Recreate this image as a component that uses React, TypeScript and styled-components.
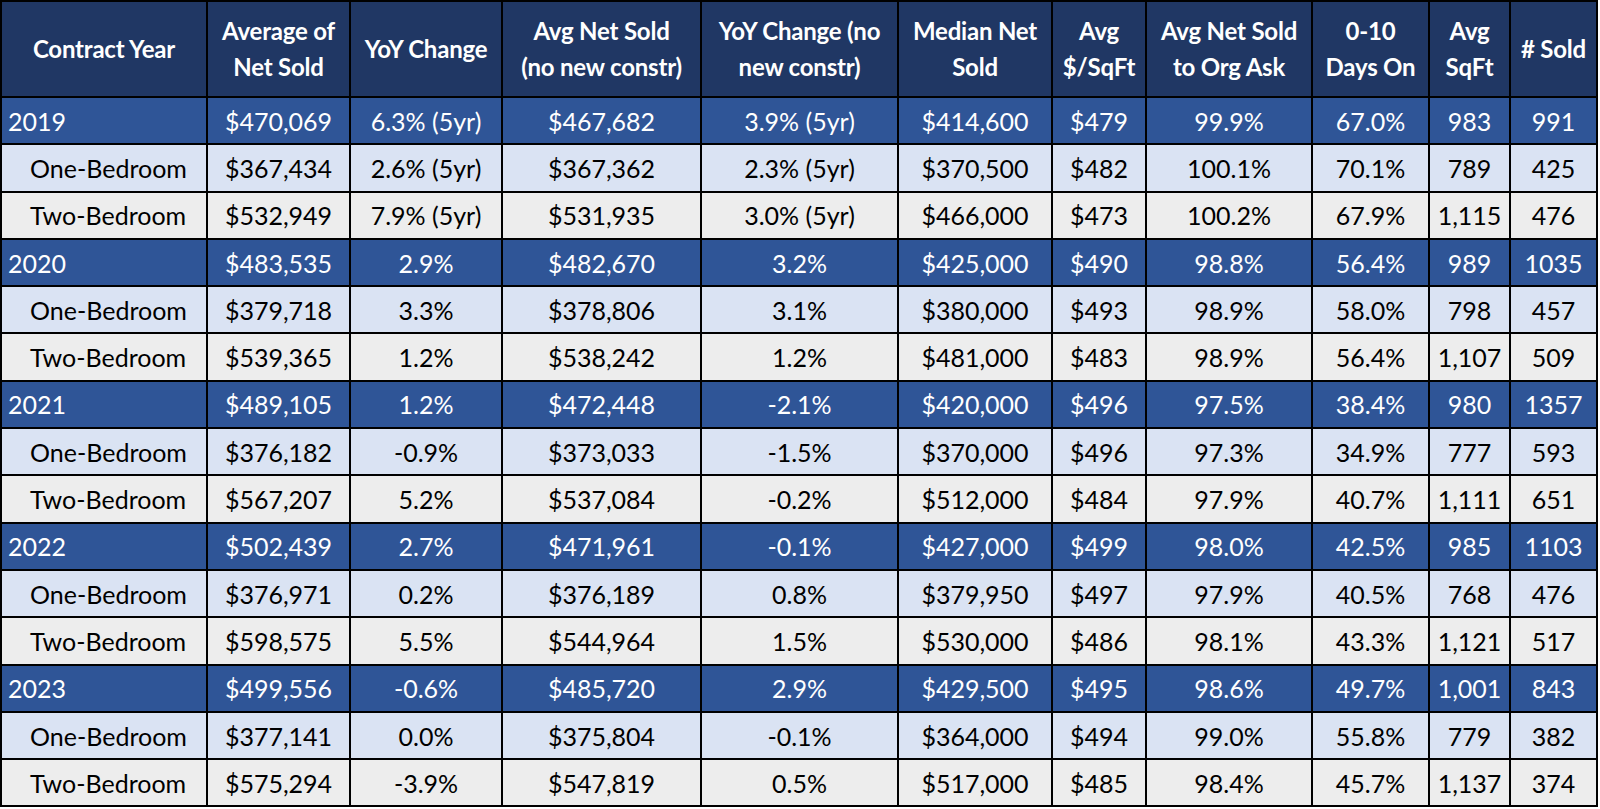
import styled, { createGlobalStyle } from "styled-components";

const GlobalStyle = createGlobalStyle`
    html, body {
        margin: 0;
        padding: 0;
        background: #ffffff;
    }
    body {
        font-family: "Lato", "Liberation Sans", sans-serif;
    }
`;

type RowKind = "year" | "one" | "two";

const columnWidths = [206, 143, 152, 199, 197, 154, 94, 166, 117, 81, 87];

// each header is split the way the sheet wraps it
const headers: string[][] = [
    ["Contract Year"],
    ["Average of", "Net Sold"],
    ["YoY Change"],
    ["Avg Net Sold", "(no new constr)"],
    ["YoY Change (no", "new constr)"],
    ["Median Net", "Sold"],
    ["Avg", "$/SqFt"],
    ["Avg Net Sold", "to Org Ask"],
    ["0-10", "Days On"],
    ["Avg", "SqFt"],
    ["# Sold"],
];

const rows: { kind: RowKind; cells: string[] }[] = [
    { kind: "year", cells: ["2019", "$470,069", "6.3% (5yr)", "$467,682", "3.9% (5yr)", "$414,600", "$479", "99.9%", "67.0%", "983", "991"] },
    { kind: "one", cells: ["One-Bedroom", "$367,434", "2.6% (5yr)", "$367,362", "2.3% (5yr)", "$370,500", "$482", "100.1%", "70.1%", "789", "425"] },
    { kind: "two", cells: ["Two-Bedroom", "$532,949", "7.9% (5yr)", "$531,935", "3.0% (5yr)", "$466,000", "$473", "100.2%", "67.9%", "1,115", "476"] },
    { kind: "year", cells: ["2020", "$483,535", "2.9%", "$482,670", "3.2%", "$425,000", "$490", "98.8%", "56.4%", "989", "1035"] },
    { kind: "one", cells: ["One-Bedroom", "$379,718", "3.3%", "$378,806", "3.1%", "$380,000", "$493", "98.9%", "58.0%", "798", "457"] },
    { kind: "two", cells: ["Two-Bedroom", "$539,365", "1.2%", "$538,242", "1.2%", "$481,000", "$483", "98.9%", "56.4%", "1,107", "509"] },
    { kind: "year", cells: ["2021", "$489,105", "1.2%", "$472,448", "-2.1%", "$420,000", "$496", "97.5%", "38.4%", "980", "1357"] },
    { kind: "one", cells: ["One-Bedroom", "$376,182", "-0.9%", "$373,033", "-1.5%", "$370,000", "$496", "97.3%", "34.9%", "777", "593"] },
    { kind: "two", cells: ["Two-Bedroom", "$567,207", "5.2%", "$537,084", "-0.2%", "$512,000", "$484", "97.9%", "40.7%", "1,111", "651"] },
    { kind: "year", cells: ["2022", "$502,439", "2.7%", "$471,961", "-0.1%", "$427,000", "$499", "98.0%", "42.5%", "985", "1103"] },
    { kind: "one", cells: ["One-Bedroom", "$376,971", "0.2%", "$376,189", "0.8%", "$379,950", "$497", "97.9%", "40.5%", "768", "476"] },
    { kind: "two", cells: ["Two-Bedroom", "$598,575", "5.5%", "$544,964", "1.5%", "$530,000", "$486", "98.1%", "43.3%", "1,121", "517"] },
    { kind: "year", cells: ["2023", "$499,556", "-0.6%", "$485,720", "2.9%", "$429,500", "$495", "98.6%", "49.7%", "1,001", "843"] },
    { kind: "one", cells: ["One-Bedroom", "$377,141", "0.0%", "$375,804", "-0.1%", "$364,000", "$494", "99.0%", "55.8%", "779", "382"] },
    { kind: "two", cells: ["Two-Bedroom", "$575,294", "-3.9%", "$547,819", "0.5%", "$517,000", "$485", "98.4%", "45.7%", "1,137", "374"] },
];

const rowColors: Record<RowKind, { bg: string; fg: string }> = {
    year: { bg: "#2f5597", fg: "#ffffff" },
    one: { bg: "#dae3f3", fg: "#000000" },
    two: { bg: "#ededed", fg: "#000000" },
};

const Table = styled.table`
    border-collapse: collapse;
    table-layout: fixed;
    width: 1598px;
    margin: 0;
    border: 2px solid #000000;
`;

const HeadRow = styled.tr`
    height: 96px;
    background: #203764;
`;

const HeadCell = styled.th`
    border: 2px solid #000000;
    color: #ffffff;
    font-size: 24px;
    font-weight: 700;
    line-height: 36px;
    letter-spacing: -0.2px;
    text-align: center;
    vertical-align: middle;
    white-space: nowrap;
    padding: 0;
`;

const HeadLine = styled.span`
    display: block;
`;

const BodyRow = styled.tr<{ $kind: RowKind }>`
    height: 47.3px;
    background: ${({ $kind }) => rowColors[$kind].bg};
    color: ${({ $kind }) => rowColors[$kind].fg};
`;

const Cell = styled.td<{ $label?: boolean; $indent?: boolean }>`
    border: 2px solid #000000;
    font-size: 25px;
    font-weight: 400;
    line-height: 28px;
    white-space: nowrap;
    overflow: hidden;
    vertical-align: middle;
    text-align: ${({ $label }) => ($label ? "left" : "center")};
    padding: 0 0 0 ${({ $label, $indent }) => ($label ? ($indent ? "28px" : "6px") : "0")};
`;

export default function App() {
    return (
        <>
            <GlobalStyle />
            <Table>
                <colgroup>
                    {columnWidths.map((w, i) => (
                        <col key={i} style={{ width: w }} />
                    ))}
                </colgroup>
                <thead>
                    <HeadRow>
                        {headers.map((lines, i) => (
                            <HeadCell key={i}>
                                {lines.map((l) => (
                                    <HeadLine key={l}>{l}</HeadLine>
                                ))}
                            </HeadCell>
                        ))}
                    </HeadRow>
                </thead>
                <tbody>
                    {rows.map((row, r) => (
                        <BodyRow key={r} $kind={row.kind}>
                            {row.cells.map((c, i) => (
                                <Cell key={i} $label={i === 0} $indent={i === 0 && row.kind !== "year"}>
                                    {c}
                                </Cell>
                            ))}
                        </BodyRow>
                    ))}
                </tbody>
            </Table>
        </>
    );
}
